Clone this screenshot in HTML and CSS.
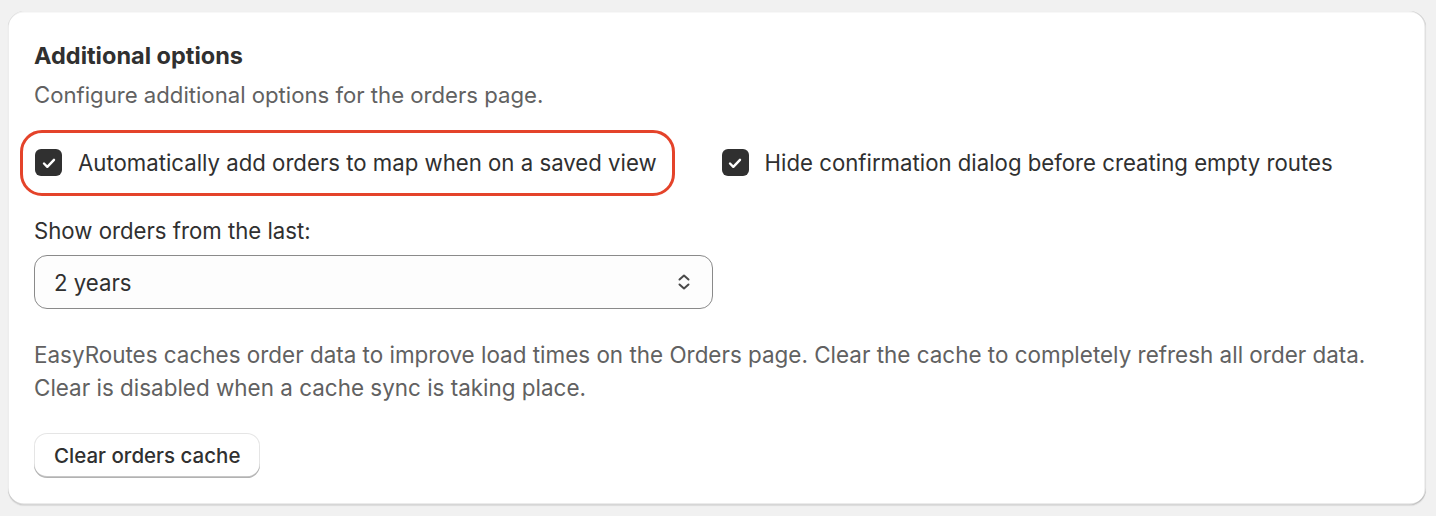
FILE: index.html
```html
<!DOCTYPE html>
<html lang="en">
<head>
<meta charset="utf-8">
<title>Additional options</title>
<link rel="stylesheet" href="styles.css">
</head>
<body>
<div class="page">
  <section class="card">
    <h2 class="card-title">Additional options</h2>
    <p class="card-desc">Configure additional options for the orders page.</p>

    <div class="check-row">
      <label class="check highlighted">
        <span class="box"><svg viewBox="0 0 20 20" width="20" height="20"><path d="M5 10.5l3.3 3.3L15 6.8" fill="none" stroke="#fff" stroke-width="2.4" stroke-linecap="round" stroke-linejoin="round"/></svg></span>
        <span class="check-text">Automatically add orders to map when on a saved view</span>
      </label>
      <label class="check">
        <span class="box"><svg viewBox="0 0 20 20" width="20" height="20"><path d="M5 10.5l3.3 3.3L15 6.8" fill="none" stroke="#fff" stroke-width="2.4" stroke-linecap="round" stroke-linejoin="round"/></svg></span>
        <span class="check-text">Hide confirmation dialog before creating empty routes</span>
      </label>
    </div>

    <div class="field">
      <div class="field-label">Show orders from the last:</div>
      <div class="select">
        <span class="select-value">2 years</span>
        <svg class="select-icon" viewBox="0 0 16 20" width="16" height="20"><path d="M3.5 7.5L8 3.5l4.5 4M3.5 12.5L8 16.5l4.5-4" fill="none" stroke="#4a4a4a" stroke-width="2" stroke-linecap="round" stroke-linejoin="round"/></svg>
      </div>
    </div>

    <p class="cache-text">EasyRoutes caches order data to improve load times on the Orders page. Clear the cache to completely refresh all order data.<br>Clear is disabled when a cache sync is taking place.</p>

    <button class="btn" type="button">Clear orders cache</button>
  </section>
</div>
</body>
</html>
```

FILE: styles.css
```css
* { box-sizing: border-box; }
html, body { margin: 0; padding: 0; }
body {
  background: #f1f1f1;
  font-family: Inter, "Noto Sans", sans-serif;
  color: #303030;
  width: 1436px;
  height: 516px;
  overflow: hidden;
}
.page {
  padding: 11px 10px 0 8px;
}
.card {
  background: #fff;
  border-radius: 16px;
  height: 494px;
  padding: 29px 26px 27px 26px;
  display: flex;
  flex-direction: column;
  align-items: flex-start;
  box-shadow:
    0 1px 1px 0 rgba(26,26,26,0.10),
    inset 0 -1.5px 0 0 rgba(0,0,0,0.16),
    inset -1.5px 0 0 0 rgba(0,0,0,0.12),
    inset 1px 0 0 0 rgba(0,0,0,0.07),
    inset 0 1.5px 0 0 rgba(0,0,0,0.06);
}
.card > * { flex: none; }
.card-title {
  margin: 0;
  font-size: 23.5px;
  line-height: 32px;
  font-weight: 650;
  color: #303030;
}
.card-desc {
  margin: 7px 0 0 0;
  font-size: 22.15px;
  line-height: 33px;
  color: #616161;
}
.check-row {
  margin-top: 34px;
  display: flex;
  gap: 64px;
  align-items: center;
}
.check {
  position: relative;
  display: flex;
  align-items: center;
  gap: 16px;
  font-size: 22.2px;
  line-height: 33px;
  padding-left: 1px;
}
.check.highlighted::after {
  content: "";
  position: absolute;
  left: -14px;
  right: -18px;
  top: -16px;
  bottom: -17px;
  border: 3px solid #e4432a;
  border-radius: 22px;
  pointer-events: none;
}
.box {
  width: 27px;
  height: 27px;
  border-radius: 6px;
  background: #303030;
  display: flex;
  align-items: center;
  justify-content: center;
  flex: none;
}
.field {
  margin-top: 35px;
  display: flex;
  flex-direction: column;
  gap: 8px;
}
.field-label {
  font-size: 22.2px;
  line-height: 33px;
}
.select {
  width: 679px;
  height: 54px;
  border: 1px solid #8a8a8a;
  border-radius: 13px;
  background: #fdfdfd;
  display: flex;
  align-items: center;
  justify-content: space-between;
  padding: 0 20px 0 19px;
}
.select-value {
  font-size: 22.2px;
}
.cache-text {
  margin: 28.5px 0 0 0;
  font-size: 22.45px;
  line-height: 33px;
  color: #616161;
}
.btn {
  margin-top: 29px;
  height: 45px;
  padding: 0 20px;
  font-family: inherit;
  font-size: 20.5px;
  font-weight: 550;
  color: #303030;
  background: #fff;
  border: none;
  border-radius: 13px;
  box-shadow:
    0 0 0 1px rgba(0,0,0,0.10) inset,
    0 -2px 0 0 rgba(0,0,0,0.22) inset;
  cursor: pointer;
}
```
